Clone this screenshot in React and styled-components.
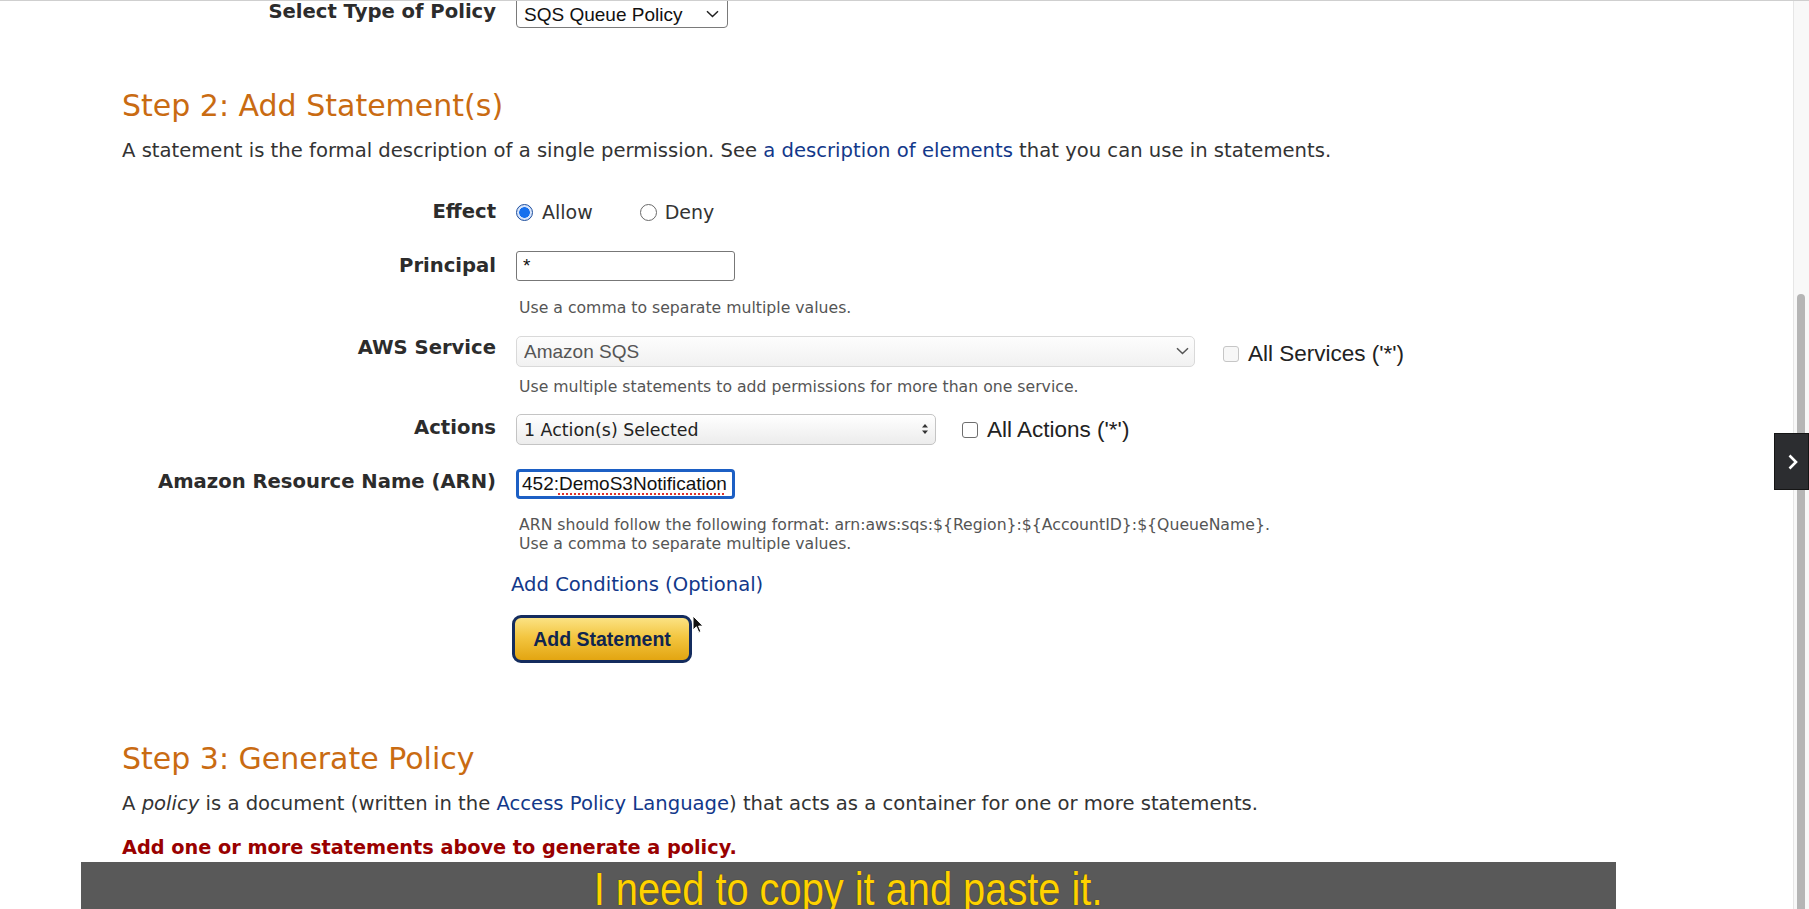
import React from 'react';
import styled, { createGlobalStyle } from 'styled-components';

const GlobalStyle = createGlobalStyle`
  html, body {
    margin: 0;
    padding: 0;
    height: 100%;
    overflow: hidden;
    background: #fff;
  }
  body {
    font-family: "DejaVu Sans", Verdana, sans-serif;
    color: #333;
  }
`;

const Arrow = ({ type }) => {
  if (type === 'updown') {
    return (
      <svg width="8" height="12" viewBox="0 0 8 12">
        <path d="M4 1 L7 4.5 L1 4.5 Z" fill="#333" />
        <path d="M4 11 L7 7.5 L1 7.5 Z" fill="#333" />
      </svg>
    );
  }
  return (
    <svg width="13" height="8" viewBox="0 0 13 8">
      <path d="M1 1.2 L6.5 6.5 L12 1.2" fill="none" stroke={type === 'light' ? '#555' : '#222'} strokeWidth="1.5" />
    </svg>
  );
};

const App = () => {
  return (
    <>
      <GlobalStyle />
      <Page>
        <Field $mt={-6}>
          <Label $h={34} $dy={1}>Select Type of Policy</Label>
          <Control>
            <SelectWrap>
              <Select $w={212} $h={34} $pt={7} $border="#7a7a7a" $radius={4} $size={19} defaultValue="sqs">
                <option value="sqs">SQS Queue Policy</option>
              </Select>
              <ArrowSlot $right={9} $top={16}><Arrow /></ArrowSlot>
            </SelectWrap>
          </Control>
        </Field>

        <StepTitle $mt={59}>Step 2: Add Statement(s)</StepTitle>
        <Paragraph $mt={15}>
          A statement is the formal description of a single permission. See <Link href="#">a description of elements</Link> that you can use in statements.
        </Paragraph>

        <Field $mt={34}>
          <Label $h={30}>Effect</Label>
          <Control>
            <ControlRow $h={30}>
              <Choice $gap={9}>
                <Radio name="effect" defaultChecked />
                <ChoiceText>Allow</ChoiceText>
              </Choice>
              <Choice $gap={8} $ml={47}>
                <Radio name="effect" />
                <ChoiceText>Deny</ChoiceText>
              </Choice>
            </ControlRow>
          </Control>
        </Field>

        <Field $mt={24}>
          <Label $h={30}>Principal</Label>
          <Control>
            <ControlRow $h={30}>
              <TextInput defaultValue="*" />
            </ControlRow>
            <Hint $mt={17}>Use a comma to separate multiple values.</Hint>
          </Control>
        </Field>

        <Field $mt={19}>
          <Label $h={31} $dy={-4}>AWS Service</Label>
          <Control>
            <ControlRow $h={31}>
              <SelectWrap>
                <Select
                  $w={679}
                  $h={31}
                  $border="#d9d9d9"
                  $radius={5}
                  $size={19}
                  $color="#555"
                  $bg="linear-gradient(#fdfdfd, #f1f1f1)"
                  defaultValue="sqs"
                >
                  <option value="sqs">Amazon SQS</option>
                </Select>
                <ArrowSlot $right={6} $top={11}><Arrow type="light" /></ArrowSlot>
              </SelectWrap>
              <Choice $gap={9} $ml={28} $dy={4}>
                <Checkbox disabled />
                <BoxText>All Services ('*')</BoxText>
              </Choice>
            </ControlRow>
            <Hint $mt={10}>Use multiple statements to add permissions for more than one service.</Hint>
          </Control>
        </Field>

        <Field $mt={18}>
          <Label $h={31} $dy={-2}>Actions</Label>
          <Control>
            <ControlRow $h={31}>
              <SelectWrap>
                <Select
                  $w={420}
                  $h={31}
                  $border="#c4c4c4"
                  $radius={5}
                  $size={17.4}
                  $font='"DejaVu Sans", Verdana, sans-serif'
                  $color="#222"
                  $bg="linear-gradient(#ffffff, #ececec)"
                  defaultValue="one"
                >
                  <option value="one">1 Action(s) Selected</option>
                </Select>
                <ArrowSlot $right={7} $top={9}><Arrow type="updown" /></ArrowSlot>
              </SelectWrap>
              <Choice $gap={9} $ml={26}>
                <Checkbox />
                <BoxText>All Actions ('*')</BoxText>
              </Choice>
            </ControlRow>
          </Control>
        </Field>

        <Field $mt={24}>
          <Label $h={30} $dy={-2}>Amazon Resource Name (ARN)</Label>
          <Control>
            <ControlRow $h={30}>
              <FocusedField role="textbox">
                452:<Misspelled>DemoS3Notification</Misspelled>
              </FocusedField>
            </ControlRow>
            <Hint $mt={16}>
              {"ARN should follow the following format: arn:aws:sqs:${Region}:${AccountID}:${QueueName}."}
              <br />
              Use a comma to separate multiple values.
            </Hint>
          </Control>
        </Field>

        <Field $mt={19}>
          <span />
          <Control>
            <ConditionsLink href="#">Add Conditions (Optional)</ConditionsLink>
          </Control>
        </Field>

        <Field $mt={17}>
          <span />
          <Control>
            <ButtonSlot>
              <AddButton type="button">Add Statement</AddButton>
              <Cursor width="12" height="19" viewBox="0 0 12 19">
                <path d="M1 1 L1 15 L4.4 11.8 L6.8 17.4 L8.9 16.5 L6.6 11.1 L11 11.1 Z" fill="#111" stroke="#fff" strokeWidth="1" />
              </Cursor>
            </ButtonSlot>
          </Control>
        </Field>

        <StepTitle $mt={78}>Step 3: Generate Policy</StepTitle>
        <Paragraph $mt={15}>
          A <em>policy</em> is a document (written in the <Link href="#">Access Policy Language</Link>) that acts as a container for one or more statements.
        </Paragraph>
        <Warning>Add one or more statements above to generate a policy.</Warning>
      </Page>

      <TopEdge />
      <ScrollTrack>
        <ScrollThumb />
      </ScrollTrack>
      <SideTab>
        <svg width="12" height="18" viewBox="0 0 12 18">
          <path d="M2.5 2.5 L9 9 L2.5 15.5" fill="none" stroke="#fff" strokeWidth="2.6" />
        </svg>
      </SideTab>

      <Caption>
        <CaptionText>I need to copy it and paste it.</CaptionText>
      </Caption>
    </>
  );
};

// Styled Components
const Page = styled.div`
  height: 909px;
  overflow: hidden;
  padding-left: 122px;
  box-sizing: border-box;
`;

const Field = styled.div`
  display: grid;
  grid-template-columns: 374px auto;
  column-gap: 20px;
  margin-top: ${(p) => p.$mt || 0}px;
`;

const Label = styled.div`
  font-weight: bold;
  font-size: 19.6px;
  line-height: ${(p) => p.$h}px;
  margin-top: ${(p) => p.$dy || 0}px;
  text-align: right;
  color: #2c2c2c;
  white-space: nowrap;
`;

const Control = styled.div`
  display: flex;
  flex-direction: column;
  align-items: flex-start;
`;

const ControlRow = styled.div`
  display: flex;
  align-items: center;
  height: ${(p) => p.$h}px;
`;

const Hint = styled.div`
  font-size: 15.7px;
  line-height: 19px;
  color: #555;
  margin-top: ${(p) => p.$mt || 0}px;
  padding-left: 3px;
`;

const StepTitle = styled.h2`
  margin: ${(p) => p.$mt}px 0 0;
  font-size: 30px;
  line-height: 36px;
  font-weight: normal;
  color: #c96b12;
`;

const Paragraph = styled.p`
  margin: ${(p) => p.$mt}px 0 0;
  font-size: 19.6px;
  line-height: 24px;
  color: #333;
`;

const Link = styled.a`
  color: #12388a;
  text-decoration: none;
`;

const Warning = styled.p`
  margin: 20px 0 0;
  font-size: 19.3px;
  line-height: 24px;
  font-weight: bold;
  color: #990000;
`;

const SelectWrap = styled.div`
  position: relative;
  display: inline-flex;
`;

const Select = styled.select`
  appearance: none;
  box-sizing: border-box;
  width: ${(p) => p.$w}px;
  height: ${(p) => p.$h}px;
  margin: 0;
  padding: ${(p) => p.$pt || 0}px 30px 0 7px;
  border: 1px solid ${(p) => p.$border};
  border-radius: ${(p) => p.$radius}px;
  background: ${(p) => p.$bg || '#fff'};
  font-family: ${(p) => p.$font || '"Liberation Sans", Arial, sans-serif'};
  font-size: ${(p) => p.$size}px;
  color: ${(p) => p.$color || '#111'};
  outline: none;
`;

const ArrowSlot = styled.span`
  position: absolute;
  right: ${(p) => p.$right}px;
  top: ${(p) => p.$top}px;
  display: flex;
  pointer-events: none;
`;

const Choice = styled.label`
  display: flex;
  align-items: center;
  gap: ${(p) => p.$gap}px;
  margin-left: ${(p) => p.$ml || 0}px;
  margin-top: ${(p) => p.$dy || 0}px;
`;

const ChoiceText = styled.span`
  font-size: 19px;
  color: #333;
`;

const BoxText = styled.span`
  font-family: "Liberation Sans", Arial, sans-serif;
  font-size: 22.5px;
  color: #222;
`;

const Radio = styled.input.attrs({ type: 'radio' })`
  appearance: none;
  margin: 0;
  width: 17px;
  height: 17px;
  box-sizing: border-box;
  border-radius: 50%;
  border: 1px solid #6a6a6a;
  background: #fff;

  &:checked {
    border: 1.5px solid #1b4c9c;
    background: radial-gradient(circle, #1670ee 0 5px, #d6e4fb 5.6px);
  }
`;

const Checkbox = styled.input.attrs({ type: 'checkbox' })`
  appearance: none;
  margin: 0;
  width: 16px;
  height: 16px;
  box-sizing: border-box;
  border-radius: 3px;
  border: 1px solid #6e6e6e;
  background: #fff;

  &:disabled {
    border-color: #c6c6c6;
    background: #f7f7f7;
  }
`;

const TextInput = styled.input.attrs({ type: 'text' })`
  box-sizing: border-box;
  width: 219px;
  height: 30px;
  margin: 0;
  padding: 0 6px;
  border: 1px solid #777;
  border-radius: 3px;
  font-family: "Liberation Sans", Arial, sans-serif;
  font-size: 19px;
  color: #111;
  outline: none;
`;

const FocusedField = styled.div`
  box-sizing: border-box;
  width: 219px;
  height: 30px;
  padding: 0 3px;
  display: flex;
  align-items: center;
  overflow: hidden;
  white-space: nowrap;
  border: 3px solid #1c5fc4;
  border-radius: 4px;
  font-family: "Liberation Sans", Arial, sans-serif;
  font-size: 19px;
  color: #111;
`;

const Misspelled = styled.span`
  text-decoration: underline dotted #e0332b;
  text-decoration-thickness: 2px;
  text-underline-offset: 3px;
`;

const ConditionsLink = styled.a`
  margin-left: -5px;
  font-size: 19.6px;
  line-height: 26px;
  color: #12388a;
  text-decoration: none;
`;

const ButtonSlot = styled.div`
  position: relative;
  margin-left: -4px;
`;

const AddButton = styled.button`
  box-sizing: border-box;
  width: 180px;
  height: 48px;
  border: 3px solid #142c5e;
  border-radius: 9px;
  background: linear-gradient(#fbe283 0%, #f3c641 45%, #e3a511 100%);
  font-family: "Liberation Sans", Arial, sans-serif;
  font-weight: bold;
  font-size: 19.5px;
  color: #10254f;
  cursor: pointer;
`;

const Cursor = styled.svg`
  position: absolute;
  left: 180px;
  top: 0;
`;

const TopEdge = styled.div`
  position: fixed;
  left: 0;
  right: 0;
  top: 0;
  height: 1px;
  background: #cfcfcf;
`;

const ScrollTrack = styled.div`
  position: fixed;
  top: 1px;
  right: 0;
  bottom: 0;
  width: 15px;
  background: #f8f8f8;
  border-left: 1px solid #e6e6e6;
`;

const ScrollThumb = styled.div`
  position: absolute;
  left: 3px;
  top: 293px;
  width: 8px;
  height: 700px;
  border-radius: 4px;
  background: #b5b5b5;
`;

const SideTab = styled.div`
  position: fixed;
  right: 0;
  top: 433px;
  width: 35px;
  height: 57px;
  box-sizing: border-box;
  border: 1px solid #151515;
  background: #2c2d30;
  display: flex;
  align-items: center;
  justify-content: center;
  padding-left: 2px;
`;

const Caption = styled.div`
  position: fixed;
  left: 81px;
  top: 862px;
  width: 1535px;
  height: 60px;
  background: #595959;
  display: flex;
  justify-content: center;
  padding-top: 4px;
  box-sizing: border-box;
`;

const CaptionText = styled.div`
  font-family: "Liberation Sans", Arial, sans-serif;
  font-size: 46px;
  line-height: 46px;
  color: #ffd200;
  transform: scaleX(0.865);
  white-space: nowrap;
  text-shadow: 0 0 1px #3a3000;
`;

export default App;
